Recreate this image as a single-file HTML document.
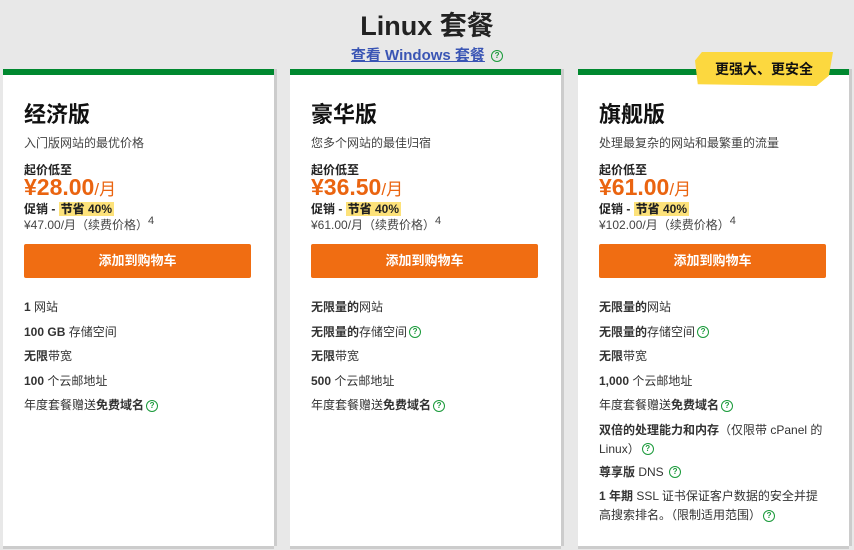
<!DOCTYPE html>
<html><head><meta charset="utf-8"><style>
body{margin:0;width:854px;height:550px;background:#e8e8e8;font-family:"Liberation Sans","Noto Sans CJK SC",sans-serif;color:#333;position:relative;overflow:hidden}
h1{position:absolute;top:4px;left:0;width:854px;text-align:center;margin:0;font-size:27px;font-weight:bold;color:#222}
.lnk{position:absolute;top:44px;left:0;width:854px;text-align:center;font-size:15px;font-weight:bold;color:#3a55b4}
.lnk span{text-decoration:underline}
.q{display:inline-block;width:10px;height:10px;border:1.3px solid #1a9a3a;border-radius:50%;font-size:8px;line-height:10px;text-align:center;color:#1a9a3a;font-weight:bold;vertical-align:middle;margin-left:2px;font-family:"Liberation Sans",sans-serif}
.card{position:absolute;top:69px;width:271px;height:477px;background:#fff;border-top:6px solid #00882f;box-shadow:3px 0 0 #ccc,0 3px 0 #ccc;box-sizing:border-box;padding:0 21px}
.t{position:absolute;top:22px;left:21px;font-size:22px;font-weight:bold;color:#111}
.s{position:absolute;top:59px;left:21px;font-size:12px;color:#444}
.p1{position:absolute;top:86px;left:21px;font-size:12px;font-weight:bold;color:#222}
.pr{position:absolute;top:99px;left:21px;font-size:23px;font-weight:bold;color:#ea6410}
.pr small{font-size:17px;font-weight:normal}
.pm{position:absolute;top:125px;left:21px;font-size:12px;font-weight:bold;color:#222}
.pm b{background:#fde27a;padding:0 2px}
.rn{position:absolute;top:140px;left:21px;font-size:12px;color:#444}
.rn sup{font-size:11px}
.btn{position:absolute;top:169px;left:21px;width:227px;height:34px;background:#f06d12;border-radius:2px;color:#fff;font-weight:bold;font-size:13px;text-align:center;line-height:34px}
.f{position:absolute;top:225px;left:21px;width:235px;font-size:12px;color:#333}
.f div{margin-bottom:10.5px;line-height:14px}
.f div.w{line-height:19px;margin-bottom:6px;margin-top:-2px}
.tag{position:absolute;top:52px;left:695px;width:138px;height:34px;background:#fcd83f;clip-path:polygon(5% 0,100% 0,97% 70%,88% 100%,2% 95%,0 25%);font-size:14px;font-weight:bold;color:#111;text-align:center;line-height:34px}
</style></head><body>
<h1>Linux 套餐</h1>
<div class="lnk"><span>查看 Windows 套餐</span> <span class="q" style="text-decoration:none">?</span></div>

<div class="card" style="left:3px">
<div class="t">经济版</div><div class="s">入门版网站的最优价格</div>
<div class="p1">起价低至</div><div class="pr">¥28.00<small>/月</small></div>
<div class="pm">促销 - <b>节省 40%</b></div><div class="rn">¥47.00/月（续费价格）<sup>4</sup></div>
<div class="btn">添加到购物车</div>
<div class="f"><div><b>1</b> 网站</div><div><b>100 GB</b> 存储空间</div><div><b>无限</b>带宽</div><div><b>100</b> 个云邮地址</div><div>年度套餐赠送<b>免费域名</b><span class="q">?</span></div></div>
</div>

<div class="card" style="left:290px">
<div class="t">豪华版</div><div class="s">您多个网站的最佳归宿</div>
<div class="p1">起价低至</div><div class="pr">¥36.50<small>/月</small></div>
<div class="pm">促销 - <b>节省 40%</b></div><div class="rn">¥61.00/月（续费价格）<sup>4</sup></div>
<div class="btn">添加到购物车</div>
<div class="f"><div><b>无限量的</b>网站</div><div><b>无限量的</b>存储空间<span class="q">?</span></div><div><b>无限</b>带宽</div><div><b>500</b> 个云邮地址</div><div>年度套餐赠送<b>免费域名</b><span class="q">?</span></div></div>
</div>

<div class="card" style="left:578px">
<div class="t">旗舰版</div><div class="s">处理最复杂的网站和最繁重的流量</div>
<div class="p1">起价低至</div><div class="pr">¥61.00<small>/月</small></div>
<div class="pm">促销 - <b>节省 40%</b></div><div class="rn">¥102.00/月（续费价格）<sup>4</sup></div>
<div class="btn">添加到购物车</div>
<div class="f"><div><b>无限量的</b>网站</div><div><b>无限量的</b>存储空间<span class="q">?</span></div><div><b>无限</b>带宽</div><div><b>1,000</b> 个云邮地址</div><div>年度套餐赠送<b>免费域名</b><span class="q">?</span></div>
<div class="w"><b>双倍的处理能力和内存</b>（仅限带 cPanel 的 Linux）<span class="q">?</span></div>
<div><b>尊享版</b> DNS <span class="q">?</span></div>
<div class="w" style="width:222px"><b>1 年期</b> SSL 证书保证客户数据的安全并提高搜索排名。（限制适用范围）<span class="q">?</span></div></div>
</div>
<div class="tag">更强大、更安全</div>
</body></html>
